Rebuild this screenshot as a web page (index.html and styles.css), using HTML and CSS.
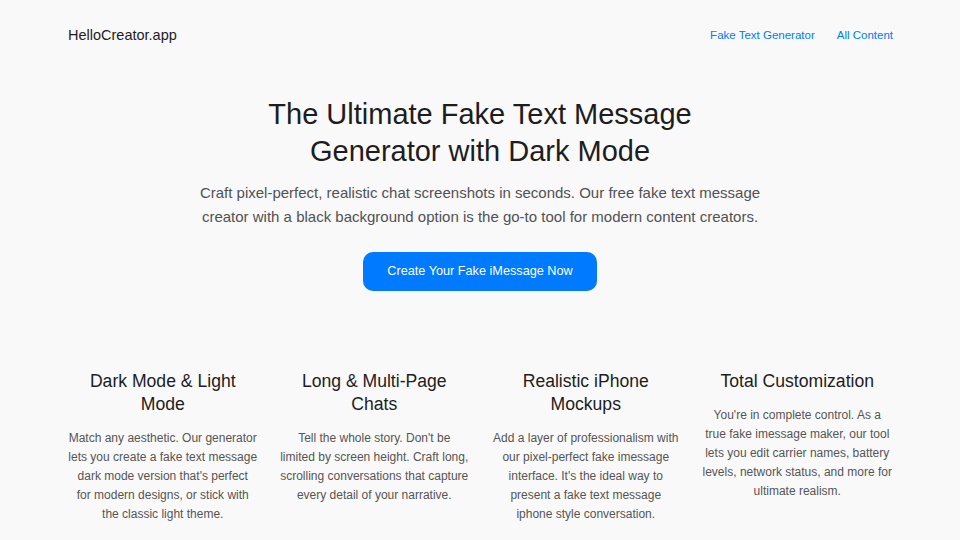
FILE: index.html
```html
<!DOCTYPE html>
<html lang="en">
<head>
<meta charset="utf-8">
<title>HelloCreator.app</title>
<link rel="stylesheet" href="styles.css">
</head>
<body>
<header class="site-header">
  <a class="brand" href="#">HelloCreator.app</a>
  <nav class="nav">
    <a href="#">Fake Text Generator</a>
    <a href="#">All Content</a>
  </nav>
</header>
<main>
  <section class="hero">
    <h1>The Ultimate Fake Text Message Generator with Dark Mode</h1>
    <p class="lead">Craft pixel-perfect, realistic chat screenshots in seconds. Our free fake text message creator with a black background option is the go-to tool for modern content creators.</p>
    <a class="cta" href="#">Create Your Fake iMessage Now</a>
  </section>
  <section class="features">
    <div class="feature">
      <h2>Dark Mode &amp; Light Mode</h2>
      <p>Match any aesthetic. Our generator lets you create a fake text message dark mode version that's perfect for&nbsp;modern designs, or stick with the classic light theme.</p>
    </div>
    <div class="feature">
      <h2>Long &amp; Multi-Page Chats</h2>
      <p>Tell the whole story. Don't be limited by screen height. Craft long, scrolling conversations that capture every detail of your narrative.</p>
    </div>
    <div class="feature">
      <h2>Realistic iPhone Mockups</h2>
      <p>Add a layer of professionalism with our pixel-perfect fake imessage interface. It's the ideal way to present a fake text message iphone style conversation.</p>
    </div>
    <div class="feature">
      <h2>Total Customization</h2>
      <p>You're in complete control. As a true fake imessage maker, our tool lets you edit carrier names, battery levels, network status, and more for ultimate realism.</p>
    </div>
  </section>
</main>
</body>
</html>
```
FILE: styles.css
```css
* { box-sizing: border-box; }
html, body { margin: 0; padding: 0; }
body {
  background: #f9f9f9;
  color: #1d1d1f;
  font-family: "Liberation Sans", Arial, sans-serif;
}
a { text-decoration: none; }
.site-header {
  display: flex;
  justify-content: space-between;
  align-items: center;
  padding: 0 67px 0 68px;
  height: 70px;
}
.brand { color: #1d1d1f; font-size: 14.5px; }
.nav { display: flex; gap: 22px; }
.nav a { color: #007aff; font-size: 11.5px; }
.hero {
  display: flex;
  flex-direction: column;
  align-items: center;
  text-align: center;
  padding-top: 26px;
}
.hero h1 {
  margin: 0;
  font-size: 29px;
  line-height: 37px;
  font-weight: 400;
  max-width: 490px;
}
.lead {
  margin: 11px 0 0;
  max-width: 590px;
  font-size: 15px;
  line-height: 24px;
  color: #515154;
}
.cta {
  margin-top: 23px;
  background: #007aff;
  color: #fff;
  border-radius: 10px;
  padding: 0 24.5px;
  height: 39px;
  line-height: 39px;
  font-size: 12.7px;
}
.features {
  display: grid;
  grid-template-columns: repeat(4, 1fr);
  gap: 22px;
  padding: 0 68px;
  margin-top: 79px;
  text-align: center;
}
.feature h2 {
  margin: 0;
  font-size: 17.6px;
  line-height: 23px;
  font-weight: 400;
}
.feature p {
  margin: 12.5px 0 0;
  font-size: 12px;
  line-height: 19.2px;
  color: #555;
}
```
